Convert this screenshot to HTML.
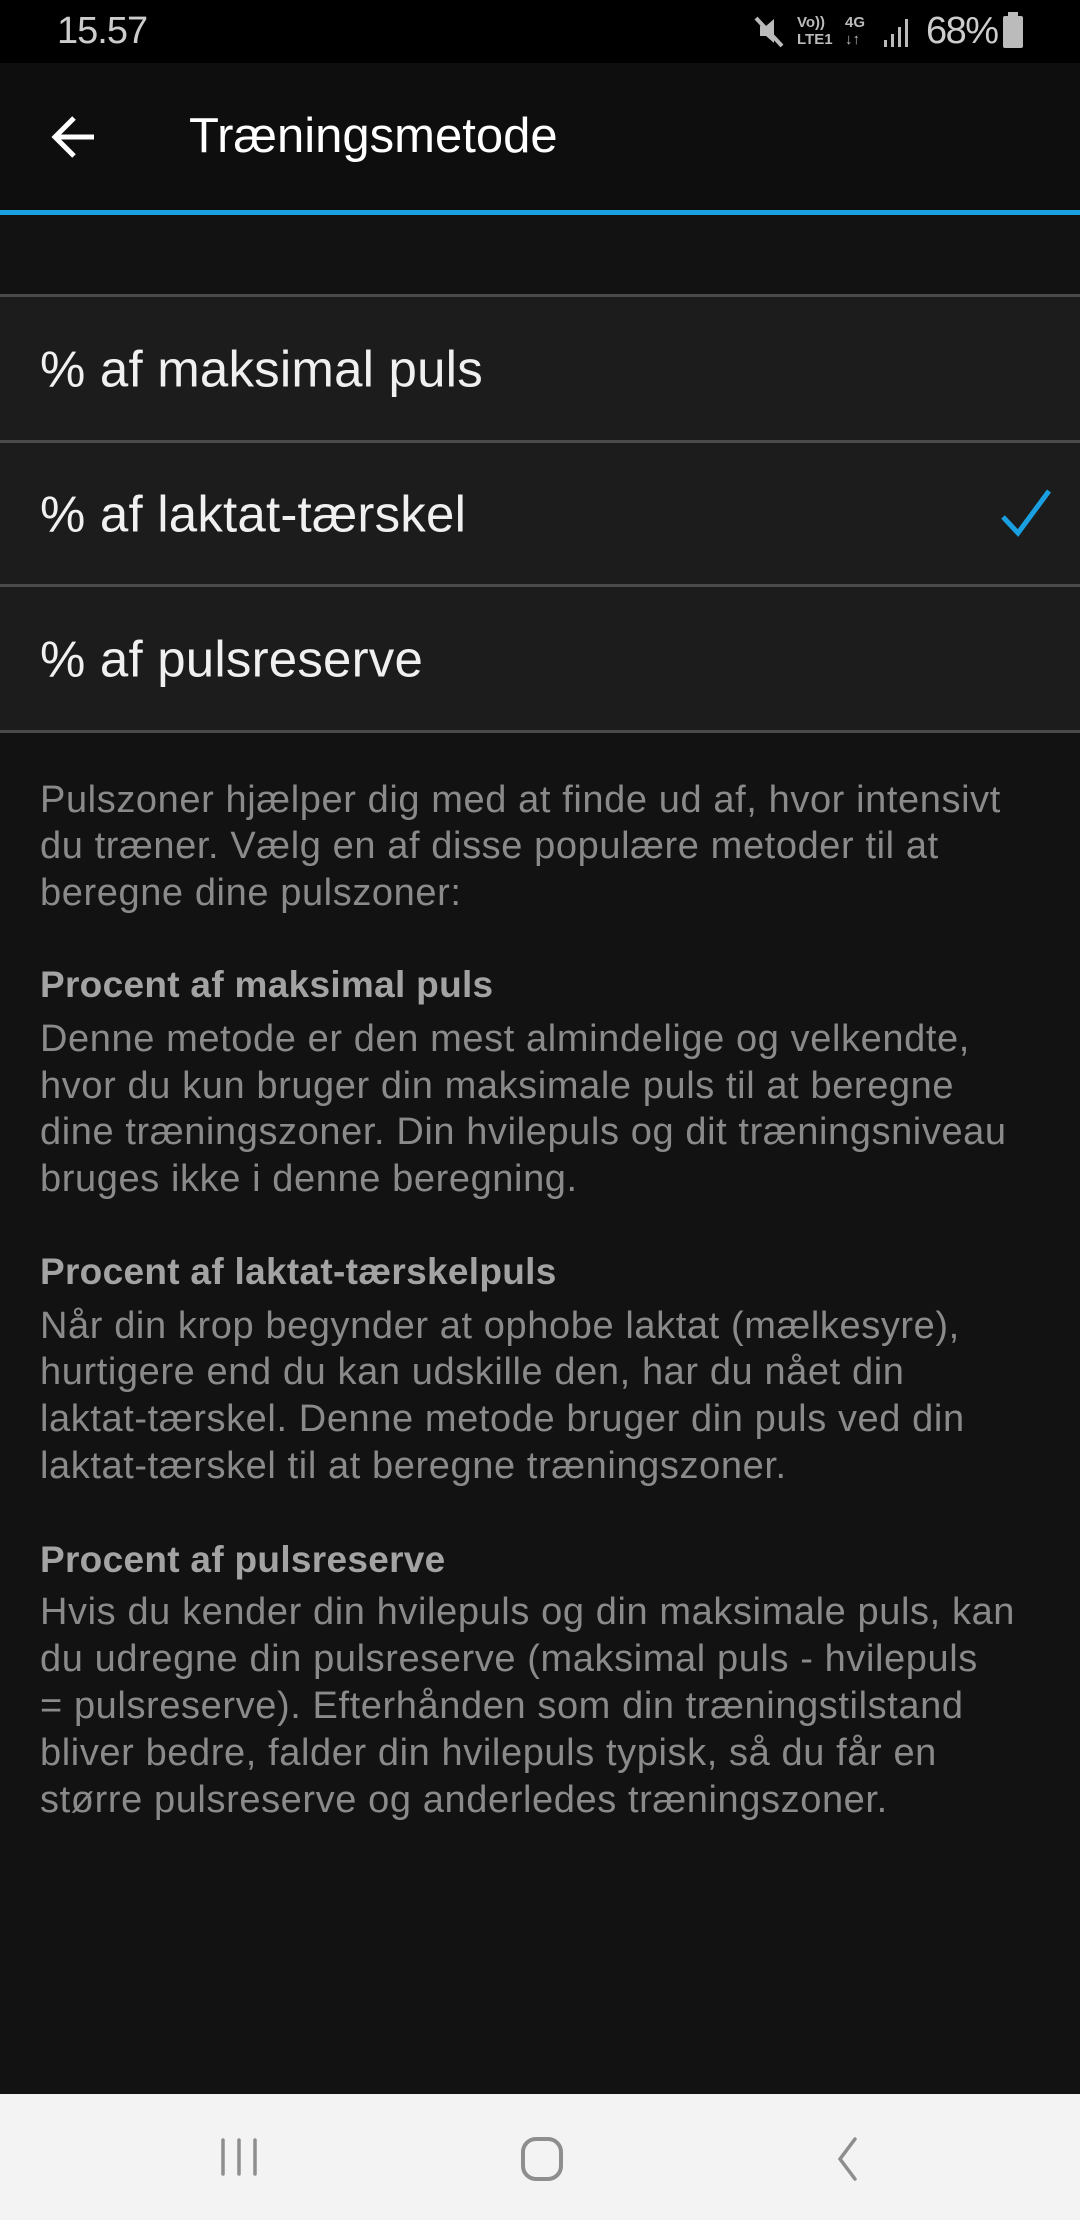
<!DOCTYPE html>
<html><head><meta charset="utf-8"><style>
body{margin:0;width:1080px;height:2220px;background:#121212;position:relative;overflow:hidden;font-family:"Liberation Sans",sans-serif}
.a{position:absolute}
.d{position:absolute;left:40px;color:#8a8a8a;font-size:38px;letter-spacing:0.6px;white-space:nowrap;line-height:46px;height:46px}
.h{color:#a3a3a3;font-weight:bold;letter-spacing:0.3px;font-size:37px}
.row{position:absolute;left:0;width:1080px;background:#1c1c1c;color:#f0f0f0;font-size:51px;letter-spacing:0.2px}
.row span{position:absolute;left:40px;top:50%;transform:translateY(-50%)}
.ln{position:absolute;left:0;width:1080px;height:3px;background:#4a4a4a}
</style></head><body>
<div class="a" style="left:0;top:0;width:1080px;height:63px;background:#000"></div>
<div class="a" style="left:57px;top:10px;color:#ccc;font-size:38px;letter-spacing:-1px">15.57</div>
<svg class="a" style="left:752px;top:14px" width="34" height="36"><path d="M8 12h6l8-7v24l-8-7H8z" fill="#bbb"/><path d="M4 4l26 28" stroke="#bbb" stroke-width="4"/></svg>
<div class="a" style="left:797px;top:14px;color:#bbb;font-size:15px;line-height:17px;font-weight:bold">Vo))<br>LTE1</div>
<div class="a" style="left:845px;top:14px;color:#bbb;font-size:15px;line-height:17px;font-weight:bold">4G<br>↓↑</div>
<svg class="a" style="left:882px;top:16px" width="28" height="32"><rect x="2" y="24" width="3" height="7" fill="#bbb"/><rect x="9" y="18" width="3" height="13" fill="#bbb"/><rect x="16" y="11" width="3" height="20" fill="#bbb"/><rect x="23" y="3" width="3" height="28" fill="#bbb"/></svg>
<div class="a" style="left:926px;top:10px;color:#ccc;font-size:38px;letter-spacing:-1.5px">68%</div>
<div class="a" style="left:1003px;top:16px;width:20px;height:32px;background:#bbb;border-radius:2px"></div>
<div class="a" style="left:1008px;top:12px;width:10px;height:5px;background:#bbb"></div>

<div class="a" style="left:0;top:63px;width:1080px;height:147px;background:#0e0e0e"></div>
<svg class="a" style="left:50px;top:114px" width="48" height="46"><path d="M44 23H6M24 4L5 23l19 19" stroke="#fff" stroke-width="5" fill="none"/></svg>
<div class="a" style="left:189px;top:108px;color:#fff;font-size:49px;letter-spacing:0">Træningsmetode</div>
<div class="a" style="left:0;top:210px;width:1080px;height:5px;background:#1aa0e0"></div>

<div class="ln" style="top:294px"></div>
<div class="row" style="top:297px;height:143px"><span>% af maksimal puls</span></div>
<div class="ln" style="top:440px"></div>
<div class="row" style="top:443px;height:141px"><span>% af laktat-tærskel</span>
<svg style="position:absolute;left:1000px;top:44px" width="52" height="52"><path d="M3 30l15 16L49 4" stroke="#1aa0e0" stroke-width="5" fill="none"/></svg></div>
<div class="ln" style="top:584px"></div>
<div class="row" style="top:587px;height:143px"><span>% af pulsreserve</span></div>
<div class="ln" style="top:730px"></div>

<div class="d" style="top:777px">Pulszoner hjælper dig med at finde ud af, hvor intensivt</div>
<div class="d" style="top:823px">du træner. Vælg en af disse populære metoder til at</div>
<div class="d" style="top:870px">beregne dine pulszoner:</div>
<div class="d h" style="top:962px">Procent af maksimal puls</div>
<div class="d" style="top:1016px">Denne metode er den mest almindelige og velkendte,</div>
<div class="d" style="top:1063px">hvor du kun bruger din maksimale puls til at beregne</div>
<div class="d" style="top:1109px">dine træningszoner. Din hvilepuls og dit træningsniveau</div>
<div class="d" style="top:1156px">bruges ikke i denne beregning.</div>
<div class="d h" style="top:1249px">Procent af laktat-tærskelpuls</div>
<div class="d" style="top:1303px">Når din krop begynder at ophobe laktat (mælkesyre),</div>
<div class="d" style="top:1349px">hurtigere end du kan udskille den, har du nået din</div>
<div class="d" style="top:1396px">laktat-tærskel. Denne metode bruger din puls ved din</div>
<div class="d" style="top:1443px">laktat-tærskel til at beregne træningszoner.</div>
<div class="d h" style="top:1537px">Procent af pulsreserve</div>
<div class="d" style="top:1589px">Hvis du kender din hvilepuls og din maksimale puls, kan</div>
<div class="d" style="top:1636px">du udregne din pulsreserve (maksimal puls - hvilepuls</div>
<div class="d" style="top:1683px">= pulsreserve). Efterhånden som din træningstilstand</div>
<div class="d" style="top:1730px">bliver bedre, falder din hvilepuls typisk, så du får en</div>
<div class="d" style="top:1777px">større pulsreserve og anderledes træningszoner.</div>

<div class="a" style="left:0;top:2094px;width:1080px;height:126px;background:#f3f3f3"></div>
<svg class="a" style="left:215px;top:2134px" width="660" height="50">
<path d="M8 6v34M24 6v34M40 6v34" stroke="#8e8e8e" stroke-width="3.5" stroke-linecap="round"/>
<rect x="308" y="5" width="38" height="40" rx="13" stroke="#8e8e8e" stroke-width="4" fill="none"/>
<path d="M640 5l-15 20 15 20" stroke="#8e8e8e" stroke-width="3.5" fill="none" stroke-linecap="round"/>
</svg>
</body></html>
